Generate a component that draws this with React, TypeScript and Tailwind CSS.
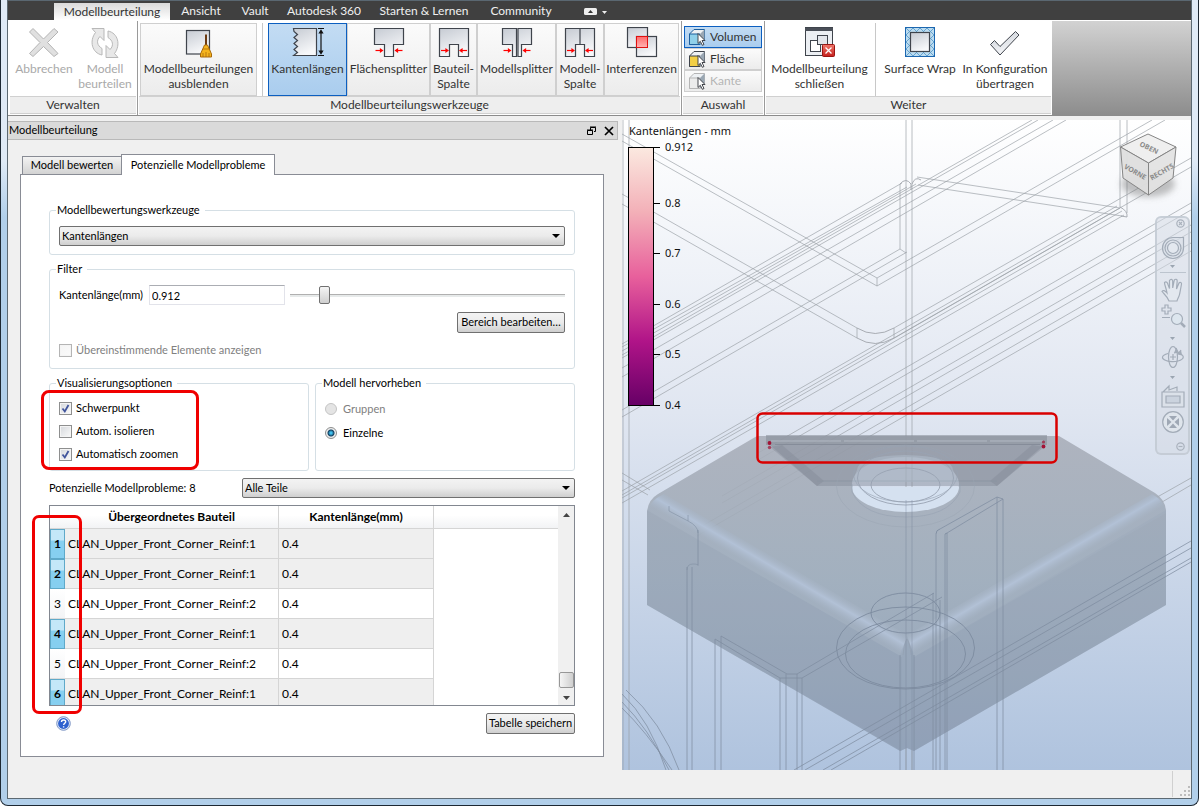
import React, { useState } from "react";

const ribbonFont = "font-['Lato','Open_Sans',sans-serif]";
const dialogFont = "font-['Lato','Noto_Sans',sans-serif]";
const viewFont = "font-['Noto_Sans','Open_Sans',sans-serif]";

/* ---------- ribbon icons ---------- */

function Defs() {
  return (
    <svg width="0" height="0" className="absolute" aria-hidden="true">
      <defs>
        <linearGradient id="steel" x1="0" y1="0" x2="0.4" y2="1">
          <stop offset="0" stopColor="#c6cbd3" />
          <stop offset="1" stopColor="#f7f8fa" />
        </linearGradient>
        <linearGradient id="redfill" x1="0" y1="0" x2="0" y2="1">
          <stop offset="0" stopColor="#ff6a6a" />
          <stop offset="1" stopColor="#ffb3b3" />
        </linearGradient>
        <linearGradient id="closered" x1="0" y1="0" x2="0" y2="1">
          <stop offset="0" stopColor="#f0776b" />
          <stop offset="1" stopColor="#c4201c" />
        </linearGradient>
      </defs>
    </svg>
  );
}

function Icon({ children }: { children: React.ReactNode }) {
  return (
    <svg width="32" height="32" viewBox="0 0 32 32" fill="none" className="shrink-0" aria-hidden="true">
      {children}
    </svg>
  );
}

const outline = { fill: "url(#steel)", stroke: "#3f444c", strokeWidth: 1.2 };

const Arrows = ({ l, r, y = 23.5 }: { l: number; r: number; y?: number }) => (
  <g stroke="#f00" fill="#f00" strokeWidth="1.2">
    <path d={`M${l - 8} ${y}h5`} />
    <path d={`M${l} ${y}l-3.6 -2.4v4.8z`} stroke="none" />
    <path d={`M${r + 8} ${y}h-5`} />
    <path d={`M${r} ${y}l3.6 -2.4v4.8z`} stroke="none" />
  </g>
);

const CancelIcon = () => (
  <Icon>
    <path
      d="M5 1.5 15.5 12 26 1.5 30 5 19.5 15.5 30 26.5 26 29.5 15.5 19.5 5 29.5 1.5 26.5 12 15.5 1.5 5Z"
      fill="#e0e0e0"
      stroke="#b4b4b4"
    />
  </Icon>
);
const RefreshIcon = () => (
  <Icon>
    <path d="M3 1.500h12v12l-4-4c-4 4-3 9 2 12v6.500c-10-2-13-14-6.500-22.500z" fill="#e8e8e8" stroke="#b8b8b8" />
    <path d="M29 30.500h-12v-12l4 4c4-4 3-9-2-12v-6.500c10 2 13 14 6.500 22.500z" fill="#e8e8e8" stroke="#b8b8b8" />
  </Icon>
);
const BroomIcon = () => (
  <Icon>
    <rect x="3.500" y="3.500" width="23" height="23.500" {...outline} />
    <path d="M23 7.500v12" stroke="#6b3a12" strokeWidth="2" />
    <path d="M21.500 18h3l4 9v3h-11v-3z" fill="#f5b41e" stroke="#a8690a" />
    <path d="M20 30v-4M23 30v-5M26 30v-4M20 22h6" stroke="#a8690a" strokeWidth="0.8" />
  </Icon>
);
const EdgeIcon = () => (
  <Icon>
    <path d="M1.500 1.500H24.500V28.500H1.500L5.500 25.500 2 22.500 5.500 19.500 2 16.500 5.500 13.500 2 10.500 5.500 7.500 2 4.500Z" {...outline} />
    <path d="M26 1.500h6M26 28.500h6M29 4v22" stroke="#111" strokeWidth="1.2" />
    <path d="M29 2.200l2.600 4.300h-5.200zM29 27.800l2.600-4.300h-5.200z" fill="#111" />
  </Icon>
);
const FaceSplitIcon = () => (
  <Icon>
    <path d="M1.500 1.500H30.500V17.500H20.500V29.500H11.500V17.500H1.500Z" {...outline} />
    <Arrows l={10.500} r={21.500} />
  </Icon>
);
const PartGapIcon = () => (
  <Icon>
    <path d="M1.500 1.500H30.500V29.500H20.500V17.500H11.500V29.500H1.500Z" {...outline} />
    <Arrows l={11} r={21} />
  </Icon>
);
const ModelSplitIcon = () => (
  <Icon>
    <path d="M1.500 1.500H15.500V29.500H11.500V17.500H1.500ZM17 1.500H30.500V17.500H20.500V29.500H17Z" {...outline} />
    <Arrows l={10.500} r={21.500} />
  </Icon>
);
const ModelGapIcon = () => (
  <Icon>
    <path d="M1.500 1.500H30.500V29.500H20.500V17.500H11.500V29.500H1.500ZM16 1.500V17" {...outline} />
    <Arrows l={11} r={21} />
  </Icon>
);
const InterferenceIcon = () => (
  <Icon>
    <rect x="1.500" y="0.500" width="20" height="20" {...outline} />
    <rect x="10.500" y="9.500" width="20" height="20" {...outline} />
    <rect x="10.500" y="9.500" width="11" height="11" fill="url(#redfill)" stroke="#e01010" />
  </Icon>
);
const CloseEvalIcon = () => (
  <Icon>
    <rect x="1.500" y="0.500" width="27" height="28" fill="#eceff3" stroke="#3f444c" />
    <path d="M1 1h28v3H1z" fill="#4a4f58" />
    <rect x="6.500" y="13.500" width="10" height="11" fill="#fff" stroke="#3f444c" />
    <rect x="13.500" y="8.500" width="10" height="9" fill="#e3e6eb" stroke="#3f444c" />
    <rect x="18.500" y="17.500" width="12" height="12" rx="1" fill="url(#closered)" stroke="#9b1512" />
    <path d="M21.500 20.500l6 6M27.500 20.500l-6 6" stroke="#fff" strokeWidth="1.300" />
  </Icon>
);
const WrapIcon = () => (
  <Icon>
    <rect x="1.500" y="0.500" width="29" height="29" fill="#bcdcf0" stroke="#1c67b0" />
    <path
      d="M2 8 9 1M2 15 16 1M2 22 23 1M2 29 30 1M9 29 30 8M16 29 30 15M23 29 30 22M23 1 30 8M16 1 30 15M9 1 30 22M2 1 30 29M2 8 23 29M2 15 16 29M2 22 9 29"
      stroke="#5b9ccb"
      strokeWidth="0.9"
    />
    <rect x="6.500" y="5.500" width="19" height="19" {...outline} />
  </Icon>
);
const CheckIcon = () => (
  <Icon>
    <path d="M1.500 17.500 5.500 13.500 11 19.500 26.500 4.500 30 8 11 28Z" {...outline} strokeWidth="1" />
  </Icon>
);

function CubeIcon({ face, line }: { face: string; line: string }) {
  return (
    <svg width="18" height="18" viewBox="0 0 18 18" fill="none" aria-hidden="true">
      <path d="M1.500 6 6 1.500H16.500V11L12 16.500H1.500Z" fill="#eef1f4" stroke={line} />
      <path d="M1.500 6h10.500v10.500H1.500z" fill={face} stroke={line} />
      <path d="M12 6l4.500-4.500V11L12 16.500z" fill="#9aa7b3" />
      <path d="M10 5.500v10l2.300-2.200 2 4 1.700-.8-2-4h3z" fill="#fff" stroke="#33373d" strokeWidth="0.9" />
    </svg>
  );
}

/* ---------- ribbon ---------- */

const toolBase = "flex flex-col items-center pt-[3px] text-xs leading-[15px] text-center whitespace-pre border h-[73px] shrink-0";
const toolFlat = "border-transparent";
const toolRaised = "border-[#cfcfcf] bg-linear-to-b from-[#fbfbfb] to-[#ececec]";
const toolActive = "border-[#0c5fc0] bg-linear-to-b from-[#c3dcf3] to-[#aacdee]";

function Tool({
  label,
  icon,
  width,
  look = toolFlat,
  disabled = false,
}: {
  label: string;
  icon: React.ReactNode;
  width: string;
  look?: string;
  disabled?: boolean;
}) {
  return (
    <button type="button" disabled={disabled} className={`${toolBase} ${look} ${width} ${disabled ? "text-[#a9a9a9]" : "text-[#333]"}`}>
      {icon}
      <span className="mt-[2px]">{label}</span>
    </button>
  );
}

function Group({ title, children, className }: { title: string; children: React.ReactNode; className: string }) {
  return (
    <section aria-label={title} className={`flex shrink-0 flex-col border-r border-[#9a9a9a] pb-px ${className}`}>
      <div className="flex h-[75px] items-start pt-[2px]">{children}</div>
      <h2 className="mx-px h-[18px] border-t border-b border-[#d0d0d0] bg-[#eee] text-center text-xs leading-4 text-[#333]">{title}</h2>
    </section>
  );
}

function Pick({ label, look, face, line, disabled = false }: { label: string; look: string; face: string; line: string; disabled?: boolean }) {
  return (
    <button type="button" disabled={disabled} className={`flex h-[22px] w-full items-center gap-1 border pl-[3px] text-xs ${look} ${disabled ? "text-[#b5b5b5]" : "text-[#333]"}`}>
      <CubeIcon face={face} line={line} />
      {label}
    </button>
  );
}

function Ribbon() {
  return (
    <header className={ribbonFont}>
      <nav className="flex h-5 items-end border-t border-[#5a6771] bg-[#404040] pl-[46px] text-xs leading-4 text-[#f0f0f0]">
        <a href="#modellbeurteilung" className="h-[17px] w-[116px] bg-linear-to-b from-[#dadada] to-white text-center leading-[17px] text-[#333]">
          Modellbeurteilung
        </a>
        <a href="#ansicht" className="h-[17px] w-[62px] text-center">Ansicht</a>
        <a href="#vault" className="h-[17px] w-[46px] text-center">Vault</a>
        <a href="#a360" className="h-[17px] w-[92px] text-center">Autodesk 360</a>
        <a href="#starten" className="h-[17px] w-[108px] text-center">Starten &amp; Lernen</a>
        <a href="#community" className="h-[17px] w-[86px] text-center">Community</a>
        <button type="button" aria-label="Multifunktionsleiste minimieren" className="ml-5 flex h-[17px] items-center gap-1">
          <svg width="24" height="10" viewBox="0 0 24 10" aria-hidden="true">
            <rect x="0" y="1" width="13" height="7" rx="1.500" fill="#eee" />
            <path d="M4 6l2.500-3L9 6z" fill="#333" />
            <path d="M18 4h5l-2.500 3z" fill="#eee" />
          </svg>
        </button>
      </nav>
      <div className="flex border-b border-[#8c8c8c] bg-white pt-px pl-px">
        <Group title="Verwalten" className="w-[129px]">
          <div className="w-[5px]" />
          <Tool label="Abbrechen" icon={<CancelIcon />} width="w-[60px]" disabled />
          <Tool label={"Modell\nbeurteilen"} icon={<RefreshIcon />} width="w-[62px]" disabled />
        </Group>
        <Group title="Modellbeurteilungswerkzeuge" className="w-[544px]">
          <Tool label={"Modellbeurteilungen\nausblenden"} icon={<BroomIcon />} width="ml-[2px] w-[117px]" look={toolRaised} />
          <div className="mx-[5px] h-[73px] w-px bg-[#c8c8c8]" />
          <Tool label="Kantenlängen" icon={<EdgeIcon />} width="w-[79px]" look={toolActive} />
          <Tool label="Flächensplitter" icon={<FaceSplitIcon />} width="w-[83px]" look={toolRaised} />
          <Tool label={"Bauteil-\nSpalte"} icon={<PartGapIcon />} width="w-[47px]" look={toolRaised} />
          <Tool label="Modellsplitter" icon={<ModelSplitIcon />} width="w-[79px]" look={toolRaised} />
          <Tool label={"Modell-\nSpalte"} icon={<ModelGapIcon />} width="w-[48px]" look={toolRaised} />
          <Tool label="Interferenzen" icon={<InterferenceIcon />} width="w-[75px]" look={toolRaised} />
        </Group>
        <Group title="Auswahl" className="w-[83px]">
          <div className="flex w-full flex-col px-[2px] pt-[3px]">
            <Pick label="Volumen" look={toolActive} face="#8fd0ea" line="#1d5f9c" />
            <Pick label="Fläche" look={toolRaised} face="#f3cf45" line="#3f444c" />
            <Pick label="Kante" look={toolRaised} face="#ececec" line="#b5b5b5" disabled />
          </div>
        </Group>
        <Group title="Weiter" className="w-[287px] border-r-0">
          <Tool label={"Modellbeurteilung\nschließen"} icon={<CloseEvalIcon />} width="w-[109px]" />
          <div className="mx-px h-[73px] w-px bg-[#c8c8c8]" />
          <Tool label="Surface Wrap" icon={<WrapIcon />} width="ml-[3px] w-[80px]" />
          <Tool label={"In Konfiguration\nübertragen"} icon={<CheckIcon />} width="w-[90px]" />
        </Group>
        <div className="flex-1 bg-linear-to-b from-[#d2d2d2] to-[#8d8d8d]" />
      </div>
    </header>
  );
}

/* ---------- dialog controls ---------- */

const raised = "rounded-[2px] border border-[#707070] bg-linear-to-b from-[#f3f3f3] from-0% via-[#ebebeb] via-50% to-[#cfcfcf]";

function Combo({ label, value, className = "" }: { label: string; value: string; className?: string }) {
  return (
    <div className={`relative ${className}`}>
      <select aria-label={label} defaultValue={value} className={`h-5 w-full appearance-none pl-[2px] text-[11px] leading-4 ${raised}`}>
        <option>{value}</option>
      </select>
      <svg width="8" height="4" viewBox="0 0 8 4" className="pointer-events-none absolute right-[5px] top-2" aria-hidden="true">
        <path d="M0 0h8L4 4z" fill="#000" />
      </svg>
    </div>
  );
}

function Check({ label, checked = false, disabled = false, className }: { label: string; checked?: boolean; disabled?: boolean; className: string }) {
  return (
    <label className={`flex items-center gap-1 ${disabled ? "text-[#808080]" : ""} ${className}`}>
      <span className="relative block h-[13px] w-[13px]">
        <input
          type="checkbox"
          defaultChecked={checked}
          disabled={disabled}
          className="peer block h-[13px] w-[13px] appearance-none border border-[#8e8f8f] bg-linear-to-br from-[#d5d8dc] to-[#fafafa] shadow-[inset_0_0_0_1px_#f4f4f4] disabled:border-[#b4b4b4] disabled:from-[#f4f4f4]"
        />
        <svg viewBox="0 0 13 13" className="pointer-events-none absolute inset-0 hidden peer-checked:block" fill="none" aria-hidden="true">
          <path d="M3.500 6.500l2.300 3L9.500 3" stroke="#41559c" strokeWidth="1.800" />
        </svg>
      </span>
      {label}
    </label>
  );
}

function Radio({ label, checked = false, disabled = false }: { label: string; checked?: boolean; disabled?: boolean }) {
  return (
    <label className={`flex h-6 items-center gap-[6px] ${disabled ? "text-[#808080]" : ""}`}>
      <input
        type="radio"
        name="highlight"
        defaultChecked={checked}
        disabled={disabled}
        className="h-3 w-3 appearance-none rounded-full border border-[#8e8f8f] bg-[#f0f0f0] checked:bg-[radial-gradient(circle,#3fc0ee_0_1px,#123f60_3px,#eee_4px)] disabled:border-[#c4c4c4] disabled:bg-[#e4e4e4]"
      />
      {label}
    </label>
  );
}

const box = "min-w-0 rounded-[3px] border border-[#d5dfe5]";
const legend = "-ml-[3px] h-[14px] pl-px pr-[5px] leading-[14px]";

const rows = [
  { id: 1, part: "CLAN_Upper_Front_Corner_Reinf:1", length: "0.4", selected: true },
  { id: 2, part: "CLAN_Upper_Front_Corner_Reinf:1", length: "0.4", selected: true },
  { id: 3, part: "CLAN_Upper_Front_Corner_Reinf:2", length: "0.4", selected: false },
  { id: 4, part: "CLAN_Upper_Front_Corner_Reinf:1", length: "0.4", selected: true },
  { id: 5, part: "CLAN_Upper_Front_Corner_Reinf:2", length: "0.4", selected: false },
  { id: 6, part: "CLAN_Upper_Front_Corner_Reinf:1", length: "0.4", selected: true },
];

function IssueTable() {
  const th = "border-b border-r border-[#d5d5d5] p-0 font-bold";
  return (
    <div className="relative mt-[7px]">
      <div className={`flex h-[201px] overflow-hidden border border-[#828790] text-xs ${ribbonFont}`}>
        <div className="min-w-0 flex-1">
          <table className="w-full table-fixed border-separate border-spacing-0">
            <colgroup>
              <col className="w-[15px]" />
              <col className="w-[214px]" />
              <col className="w-[155px]" />
              <col />
            </colgroup>
            <thead>
              <tr className="h-[23px] bg-linear-to-b from-white from-40% to-[#f1f2f4]">
                <th aria-label="Nummer" className="border-b border-[#d5d5d5]" />
                <th scope="col" className={th}>Übergeordnetes Bauteil</th>
                <th scope="col" className={th}>Kantenlänge(mm)</th>
                <td className="border-b border-[#d5d5d5]" />
              </tr>
            </thead>
            <tbody>
              {rows.map((r) => (
                <tr key={r.id} className="h-[30px]">
                  <th
                    scope="row"
                    className={
                      r.selected
                        ? "border border-[#5fa9c9] bg-linear-to-b from-[#c3e7f8] from-35% to-[#86cff0] to-40% p-0 font-bold"
                        : "border-b border-[#dcdcdc] bg-linear-to-b from-white to-[#f3f4f6] p-0 font-normal"
                    }
                  >
                    {r.id}
                  </th>
                  <td className={`border-b border-r border-[#d5d5d5] p-0 pl-[3px] ${r.selected ? "bg-[#efefef]" : "bg-white"}`}>{r.part}</td>
                  <td className={`border-b border-r border-[#d5d5d5] p-0 pl-[3px] ${r.selected ? "bg-[#efefef]" : "bg-white"}`}>{r.length}</td>
                  <td />
                </tr>
              ))}
            </tbody>
          </table>
        </div>
        <div className="flex w-4 flex-col items-center justify-between bg-[#f0f0f0] pb-[5px] pt-[7px]">
          <svg width="7" height="4" viewBox="0 0 7 4" aria-hidden="true"><path d="M0 4h7L3.500 0z" fill="#444" /></svg>
          <div className="flex flex-col items-center gap-2">
            <div className="h-4 w-[15px] rounded-[2px] border border-[#979797] bg-linear-to-r from-[#f5f5f5] to-[#cfcfcf]" />
            <svg width="7" height="4" viewBox="0 0 7 4" aria-hidden="true"><path d="M0 0h7L3.500 4z" fill="#444" /></svg>
          </div>
        </div>
      </div>
      <div className="pointer-events-none absolute -left-[17px] top-[10px] h-[199px] w-[50px] rounded-[7px] border-3 border-[#f00000]" />
    </div>
  );
}

function Panel() {
  const [length, setLength] = useState("0.912");
  return (
    <aside className={`flex w-[610px] shrink-0 flex-col text-[11px] text-black ${dialogFont}`}>
      <div className="flex h-[19px] items-center justify-between border border-l-0 border-[#b9b9b9] bg-[#dadada] pr-[3px] pl-px">
        <h1>Modellbeurteilung</h1>
        <div className="flex gap-[7px]">
          <button type="button" aria-label="Fenster lösen">
            <svg width="10" height="10" viewBox="0 0 10 10" fill="none" stroke="#000" aria-hidden="true">
              <path d="M3.500 4V1.500h5v4H7M3 1h6" /><path d="M.500 4.500h5v4h-5zM0 4h6" />
            </svg>
          </button>
          <button type="button" aria-label="Schließen">
            <svg width="10" height="10" viewBox="0 0 10 10" stroke="#000" strokeWidth="1.700" aria-hidden="true"><path d="M1 1l8 8M9 1L1 9" /></svg>
          </button>
        </div>
      </div>

      <div role="tablist" className="mt-[14px] flex items-end pl-[14px]">
        <button type="button" role="tab" aria-selected="false" className="h-[18px] w-[99px] border border-r-0 border-b-0 border-[#898c95] bg-linear-to-b from-[#f3f3f3] to-[#d3d3d3]">
          Modell bewerten
        </button>
        <button type="button" role="tab" aria-selected="true" className="relative z-10 -mb-px h-[21px] w-[154px] border border-b-0 border-[#898c95] bg-white">
          Potenzielle Modellprobleme
        </button>
      </div>

      <div role="tabpanel" className="mb-[13px] ml-3 mr-[14px] flex-1 border border-[#898c95] bg-white px-7 pt-7">
        <fieldset className={`${box} px-[9px] pb-2 pt-[9px]`}>
          <legend className={legend}>Modellbewertungswerkzeuge</legend>
          <Combo label="Modellbewertungswerkzeuge" value="Kantenlängen" />
        </fieldset>

        <fieldset className={`mt-[7px] ${box} px-[9px] pb-[11px] pt-[9px]`}>
          <legend className={legend}>Filter</legend>
          <div className="flex items-center">
            <label htmlFor="edge" className="w-[90px]">Kantenlänge(mm)</label>
            <input
              id="edge"
              value={length}
              onChange={(e) => setLength(e.target.value)}
              className="h-5 w-[136px] border border-[#e2e3ea] border-t-[#abadb3] bg-white pl-[2px] text-[11px]"
            />
            <input
              type="range"
              aria-label="Kantenlänge"
              defaultValue={11}
              className="ml-[5px] h-5 min-w-0 flex-1 appearance-none bg-transparent [&::-webkit-slider-runnable-track]:h-[3px] [&::-webkit-slider-runnable-track]:border-t [&::-webkit-slider-runnable-track]:border-[#b0b0b0] [&::-webkit-slider-runnable-track]:bg-[#e7eaea] [&::-webkit-slider-thumb]:-mt-[9px] [&::-webkit-slider-thumb]:h-[18px] [&::-webkit-slider-thumb]:w-[11px] [&::-webkit-slider-thumb]:appearance-none [&::-webkit-slider-thumb]:rounded-[2px] [&::-webkit-slider-thumb]:border [&::-webkit-slider-thumb]:border-[#707070] [&::-webkit-slider-thumb]:bg-linear-to-b [&::-webkit-slider-thumb]:from-[#f5f5f5] [&::-webkit-slider-thumb]:to-[#cfcfcf]"
            />
          </div>
          <div className="mt-[7px] flex justify-end">
            <button type="button" className={`h-[21px] w-[108px] whitespace-nowrap ${raised}`}>Bereich bearbeiten…</button>
          </div>
          <Check label="Übereinstimmende Elemente anzeigen" disabled className="mt-[10px] h-[14px]" />
        </fieldset>

        <div className="relative mt-[7px] flex gap-[6px]">
          <fieldset className={`${box} w-[260px] px-[9px] pb-1 pt-[7px]`}>
            <legend className={legend}>Visualisierungsoptionen</legend>
            <Check label="Schwerpunkt" checked className="h-[23px]" />
            <Check label="Autom. isolieren" className="h-[23px]" />
            <Check label="Automatisch zoomen" checked className="h-[23px]" />
          </fieldset>
          <fieldset className={`${box} flex-1 px-[9px] pt-[7px]`}>
            <legend className={legend}>Modell hervorheben</legend>
            <Radio label="Gruppen" disabled />
            <Radio label="Einzelne" checked />
          </fieldset>
          <div className="pointer-events-none absolute -left-2 top-[14px] h-[80px] w-[158px] rounded-lg border-3 border-[#f00000]" />
        </div>

        <div className="mt-[7px] flex items-center">
          <span className="w-[193px]">Potenzielle Modellprobleme: 8</span>
          <Combo label="Teile" value="Alle Teile" className="flex-1" />
        </div>

        <IssueTable />

        <div className="mt-[7px] flex items-center justify-between pl-[7px]">
          <button type="button" aria-label="Hilfe">
            <svg width="15" height="15" viewBox="0 0 15 15" aria-hidden="true">
              <circle cx="7.500" cy="7.500" r="6.800" fill="#dfe8f8" stroke="#7d95c4" />
              <circle cx="7.500" cy="7.500" r="5.400" fill="#2f62cf" />
              <path d="M5.500 6c0-2.800 4.200-2.600 4.200-.2 0 1.400-2 1.400-2 3.100M7.600 10.300v1.300" stroke="#fff" strokeWidth="1.400" fill="none" />
            </svg>
          </button>
          <button type="button" className={`h-[21px] w-[89px] whitespace-nowrap ${raised}`}>Tabelle speichern</button>
        </div>
      </div>
    </aside>
  );
}

/* ---------- model view ---------- */

type Seg = [number, number, number, number];

const backSegs: Seg[] = [
  [623, 120, 623, 770], [629, 120, 629, 770], [906, 120, 906, 770], [912, 120, 912, 770],
  [1120, 120, 1120, 207], [1127, 120, 1127, 213],
  [622, 344, 902, 183], [622, 347, 907, 187], [622, 351, 916, 184], [622, 355, 1032, 120], [622, 358, 1038, 120],
  [622, 368, 1053, 120], [622, 377, 1066, 120],
  [622, 410, 900, 249], [622, 417, 907, 252],
  [877, 278, 1152, 120], [877, 286, 1165, 120], [877, 278, 877, 286],
  [622, 134, 877, 278], [622, 141, 877, 286],
  [622, 194, 857, 328], [622, 204, 857, 338], [857, 328, 857, 338], [894, 328, 894, 338],
  [894, 328, 1191, 158], [894, 338, 1191, 167],
  [622, 491, 1117, 206], [622, 495, 1120, 208], [622, 498, 1122, 211], [622, 503, 1124, 215],
  [917, 177, 1120, 208], [918, 185, 1122, 216],
  [900, 184, 900, 249], [900, 249, 906, 253],
  [758, 453, 1191, 203], [758, 460, 1191, 210], [722, 496, 1191, 225], [722, 503, 1191, 232],
  [697, 529, 1191, 243], [697, 536, 1191, 251],
  [622, 473, 650, 490], [622, 480, 648, 495],
  [1152, 500, 1191, 478], [1157, 505, 1191, 485],
];

const frontSegs: Seg[] = [
  [794, 770, 1191, 541], [805, 770, 1191, 548], [823, 770, 1191, 558], [831, 770, 1191, 562],
  [687, 567, 687, 770], [692, 567, 692, 770], [698, 530, 698, 565],
  [715, 639, 715, 770], [721, 636, 721, 770], [780, 678, 780, 770], [786, 674, 786, 770],
  [797, 674, 797, 770], [802, 678, 802, 770],
  [715, 639, 780, 678], [721, 636, 787, 674], [787, 674, 797, 674], [780, 678, 802, 678],
  [797, 674, 934, 593], [802, 678, 942, 597],
  [933, 593, 933, 770], [936, 534, 936, 770], [940, 600, 940, 770], [945, 534, 945, 770], [947, 533, 947, 770],
  [997, 497, 997, 770], [1003, 499, 1003, 770], [997, 497, 1003, 499], [997, 497, 940, 529], [1003, 499, 947, 533],
  [900, 655, 900, 770], [914, 655, 914, 770],
];

const toPath = (s: Seg[]) => s.map(([a, b, c, d]) => `M${a} ${b}L${c} ${d}`).join("");

const scale = [
  { y: 147, t: "0.912" }, { y: 203, t: "0.8" }, { y: 253, t: "0.7" }, { y: 304, t: "0.6" }, { y: 354, t: "0.5" }, { y: 405, t: "0.4" },
];

function Scene() {
  return (
    <svg viewBox="622 120 569 650" preserveAspectRatio="xMinYMin slice" className="absolute inset-0 h-full w-full" role="img" aria-label="Modellansicht">
      <defs>
        <linearGradient id="heat" x1="0" y1="0" x2="0" y2="1">
          <stop offset="0" stopColor="#fbe9e0" />
          <stop offset="0.25" stopColor="#f3b0b8" />
          <stop offset="0.5" stopColor="#e8609c" />
          <stop offset="0.75" stopColor="#b01488" />
          <stop offset="1" stopColor="#660066" />
        </linearGradient>
        <linearGradient id="body" x1="0" y1="0" x2="0" y2="1">
          <stop offset="0" stopColor="#a8adb8" />
          <stop offset="0.45" stopColor="#9dabb9" />
          <stop offset="1" stopColor="#8f9fb5" />
        </linearGradient>
        <linearGradient id="bandL" gradientUnits="userSpaceOnUse" x1="782" y1="561" x2="772" y2="578">
          <stop offset="0" stopColor="#a5b2c2" stopOpacity="0.3" />
          <stop offset="0.5" stopColor="#b2c1d6" />
          <stop offset="1" stopColor="#a3b0c0" stopOpacity="0.5" />
        </linearGradient>
        <linearGradient id="bandR" gradientUnits="userSpaceOnUse" x1="1031" y1="561" x2="1041" y2="578">
          <stop offset="0" stopColor="#a5b2c2" stopOpacity="0.3" />
          <stop offset="0.5" stopColor="#b2c1d6" />
          <stop offset="1" stopColor="#a3b0c0" stopOpacity="0.5" />
        </linearGradient>
        <filter id="soft" x="-50%" y="-50%" width="200%" height="200%"><feGaussianBlur stdDeviation="3" /></filter>
      </defs>

      <path d={toPath(backSegs)} stroke="#9a9fa6" strokeOpacity="0.75" strokeWidth="0.9" fill="none" />
      <path d="M857 328Q875 339 894 328M857 338Q875 349 894 338M900 184q6-7 11 0v6M912 184q3-8 9-4M1120 207q8 4 7 10l-6-1" stroke="#a0a5ac" strokeWidth="0.9" fill="none" />

      {/* solid block */}
      <path
        fillRule="evenodd"
        d="M757 436H1059L1155 493Q1166 500 1166 512V605L914 751 907 748 900 751 647 605V512Q648 500 658 494ZM852 484a53.500 27 0 1 0 107 0a53.500 27 0 1 0-107 0Z"
        fill="url(#body)"
        fillOpacity="0.88"
      />
      <path d="M647 510L902 657V751L647 605ZM1166 510L914 657V751L1166 605Z" fill="#8796ac" fillOpacity="0.22" />
      <path d="M664 494L907 635 902 657 648 511Q650 500 664 494Z" fill="url(#bandL)" />
      <path d="M1152 494L907 635 914 657 1166 513Q1166 502 1152 494Z" fill="url(#bandR)" />
      <path d="M900 657Q902 646 907 640 912 646 914 657V751L907 748 900 751Z" fill="#93a2b6" fillOpacity="0.35" />
      <path d="M903 655q1-12 4-16q3 4 4 16" stroke="#94a1b3" strokeWidth="0.8" fill="none" />

      {/* recessed plate */}
      <path d="M766 435H1047V445H766Z" fill="#848b96" fillOpacity="0.55" />
      <path d="M770 445H1044L997 486H817Z" fill="#838a96" fillOpacity="0.45" />
      <path d="M770 447L817 486 824 481 782 445ZM1044 447L997 486 990 481 1032 445Z" fill="#79818e" fillOpacity="0.3" />
      <path d="M817 481H997" stroke="#8b94a2" strokeWidth="0.9" />
      <path d="M771 441H1043" stroke="#c6ccd6" strokeOpacity="0.6" strokeDasharray="70 3" />
      <path d="M775 444.500H1040" stroke="#777f8b" strokeOpacity="0.6" strokeWidth="0.9" />
      <path d="M857 470Q858 456 905 455 952 456 953 470L959 482H852Z" fill="#aebccb" fillOpacity="0.55" />
      <path d="M852 487a53.500 25 0 0 0 107 0Z" fill="#d5e1f0" />
      <g fill="none" stroke="#98a3b2" strokeWidth="0.9">
        <ellipse cx="905.500" cy="486" rx="69" ry="41" strokeOpacity="0.5" />
        <ellipse cx="905.500" cy="485" rx="34.500" ry="17" />
        <ellipse cx="905.500" cy="478" rx="48" ry="27" />
        <ellipse cx="905.500" cy="474" rx="52" ry="28" strokeOpacity="0.7" />
        <path d="M852 484v8q12 25 54 25t54-25v-8" strokeOpacity="0.7" />
      </g>

      {/* wireframe in front of the block */}
      <g fill="none" stroke="#7d8b9f" strokeWidth="0.9">
        <path d={toPath(frontSegs)} strokeOpacity="0.8" />
        <path d="M936 534q0-4 4-5M945 534l2-1" />
        <ellipse cx="905.500" cy="648" rx="69" ry="41" />
        <ellipse cx="905.500" cy="654" rx="60" ry="34" />
        <ellipse cx="905.500" cy="613" rx="34.500" ry="20" />
        <path d="M622 694Q650 720 666 770M622 702Q648 728 669 770M622 708Q645 730 672 770M626 690Q662 722 679 770" strokeOpacity="0.8" />
        <path d="M906 500V770M912 500V770" strokeOpacity="0.5" />
        <path d="M669 506v5l19 10q10 5 10 12M688 515v6M687 570q0-6 6-6t5 2" strokeOpacity="0.6" />
      </g>

      <g fill="#a31235">
        <circle cx="769.500" cy="443" r="1.900" />
        <circle cx="769.500" cy="447.500" r="1.700" fillOpacity="0.7" />
        <circle cx="1043.500" cy="442" r="1.600" fillOpacity="0.7" />
        <circle cx="1043.500" cy="446.500" r="1.900" />
      </g>
      <rect x="757.500" y="413.500" width="299" height="49" rx="5" fill="none" stroke="#d90000" strokeWidth="2.500" />

      {/* colour legend */}
      <rect x="628.500" y="147.500" width="25" height="258" fill="url(#heat)" stroke="#000" />
      {scale.map((s) => (
        <g key={s.t}>
          <path d={`M654 ${s.y + 0.5}h6`} stroke="#000" />
          <text x="665" y={s.y + 4} fontSize="11" fill="#111">{s.t}</text>
        </g>
      ))}
      <text x="629" y="135" fontSize="11" fill="#111">Kantenlängen - mm</text>

      {/* view cube */}
      <ellipse cx="1148" cy="184" rx="27" ry="13" fill="#777" fillOpacity="0.45" filter="url(#soft)" />
      <g stroke="#858585" strokeLinejoin="round">
        <path d="M1148 134L1176 147 1148.500 163 1120.500 147Z" fill="#eee" fillOpacity="0.95" />
        <path d="M1120.500 147L1148.500 163V195L1123 178Z" fill="#dedede" fillOpacity="0.95" />
        <path d="M1176 147L1148.500 163V195L1173 178Z" fill="#e3e3e3" fillOpacity="0.95" />
      </g>
      <g fontSize="7" fontWeight="700" fill="#8a8a8a" textAnchor="middle">
        <text transform="translate(1148 150) rotate(26)">OBEN</text>
        <text transform="translate(1134 174) rotate(30)">VORNE</text>
        <text transform="translate(1163 174) rotate(-30)">RECHTS</text>
      </g>
    </svg>
  );
}

const Caret = () => (
  <svg width="5" height="3" viewBox="0 0 5 3" className="shrink-0" aria-hidden="true"><path d="M0 0h5L2.500 3z" fill="#9ba5b1" /></svg>
);

function NavButton({ label, children }: { label: string; children: React.ReactNode }) {
  return (
    <button type="button" aria-label={label} className="shrink-0">
      <svg width="26" height="26" viewBox="0 0 26 26" fill="none" stroke="#a3acb8" strokeWidth="1.200" aria-hidden="true">{children}</svg>
    </button>
  );
}

function NavBar() {
  return (
    <div role="toolbar" aria-label="Navigation" className="absolute right-px top-24 flex h-[239px] w-[35px] flex-col items-center rounded-md border-2 border-[#c1c8d1]/80 bg-[#d3dae4]/50">
      <button type="button" aria-label="Schließen" className="mt-px mr-[3px] self-end">
        <svg width="9" height="9" viewBox="0 0 9 9" fill="none" stroke="#aab2bd" strokeWidth="1.200" aria-hidden="true"><circle cx="4.500" cy="4.500" r="3.700" /><path d="M3 3l3 3M6 3L3 6" /></svg>
      </button>
      <div className="mt-[7px] flex flex-col items-center">
        <NavButton label="Navigationsrad">
          <path d="M13 2.500H23.500V13A10.500 10.500 0 1 1 13 2.500Z" fill="#d9dfe7" fillOpacity="0.6" />
          <circle cx="13" cy="13" r="8" /><circle cx="13" cy="13" r="5.500" fill="#e3e8ef" />
        </NavButton>
        <div className="h-1" />
        <Caret />
        <div className="my-1 h-px w-[26px] bg-[#bcc4ce]" />
        <NavButton label="Pan">
          <path d="M9 24C7 19 4 17 2 14.500c1-1.800 3-1 5 1.500C6.500 12 4.500 8 4.500 5.500c1.800-1.300 3 0 3.500 2L9.500 11.500 9.500 3.500c1-1.800 3-1.500 3.200.5V11l1.600-8c1.200-1.300 3-.8 2.900 1l-.7 8 2.500-6c1-1.200 2.700-.5 2.500 1-1 6-1.500 8-2 10.500-.6 3-2 4-2.500 6.500Z" fill="#e3e8ef" />
        </NavButton>
        <NavButton label="Zoom">
          <path d="M5 2h3v3h3v3h-3v3h-3v-3h-3v-3h3zM2 14.500h8" />
          <circle cx="17" cy="16" r="5.500" fill="#dde6ee" /><path d="M21 20l4 4" strokeWidth="2.500" />
        </NavButton>
        <div className="h-2" />
        <Caret />
        <div className="h-1" />
        <NavButton label="Orbit">
          <ellipse cx="13" cy="13" rx="4.500" ry="10.500" /><path d="M18 9c7 2 7 6 0 8-3 1-9 1-12-.500-5-2-5-5 2-7M13 10v6M10 13h6" /><path d="M16 4l2 4-4 1M21 6l-3 4 4 1" fill="#a3acb8" />
        </NavButton>
        <div className="h-[6px]" />
        <Caret />
        <div className="h-1" />
        <NavButton label="Ansicht">
          <path d="M2 9h22v15H2zM3 9 9 3v4l8-3v4" fill="#dbe1e9" /><path d="M6 13h14v7H6z" fill="#cbd3de" />
        </NavButton>
        <NavButton label="Ausrichten">
          <circle cx="13" cy="13" r="10.300" fill="#dfe5ec" /><path d="M9 7h8l-4 4.500zM9 19h8l-4-4.500zM7 9v8l4.500-4zM19 9v8l-4.500-4z" fill="#9fa8b5" stroke="none" />
        </NavButton>
      </div>
      <button type="button" aria-label="Optionen" className="mt-auto mb-[2px] mr-[3px] self-end">
        <svg width="9" height="9" viewBox="0 0 9 9" fill="none" stroke="#aab2bd" strokeWidth="1.200" aria-hidden="true"><circle cx="4.500" cy="4.500" r="3.700" /><path d="M2.500 4.500h4" /></svg>
      </button>
    </div>
  );
}

export default function App() {
  return (
    <div className="flex min-h-screen flex-col rounded-b-lg border-x border-b border-[#1d2833] bg-linear-to-b from-[#dfeaf6] from-20% to-[#b1cfea] to-27% px-[6px] pb-[6px]">
      <Defs />
      <div className="flex flex-1 flex-col border-x border-b border-[#5c6972] bg-[#f0f0f0]">
        <Ribbon />
        <main className="flex flex-1 gap-1 pt-1">
          <div className="flex pt-px">
            <Panel />
          </div>
          <div className={`relative min-w-0 flex-1 overflow-hidden bg-linear-to-b from-white via-[#e0e6f1] via-45% to-[#afc3de] ${viewFont}`}>
            <Scene />
            <NavBar />
          </div>
        </main>
        <footer className="flex h-7 justify-end py-px">
          <div className="flex w-[19px] items-end justify-end border-l border-[#d0d0d0] p-px">
            <svg width="10" height="10" viewBox="0 0 10 10" fill="#bcbcbc" aria-hidden="true">
              <path d="M8 0h2v2H8zM8 4h2v2H8zM4 4h2v2H4zM8 8h2v2H8zM4 8h2v2H4zM0 8h2v2H0z" />
            </svg>
          </div>
        </footer>
      </div>
    </div>
  );
}
